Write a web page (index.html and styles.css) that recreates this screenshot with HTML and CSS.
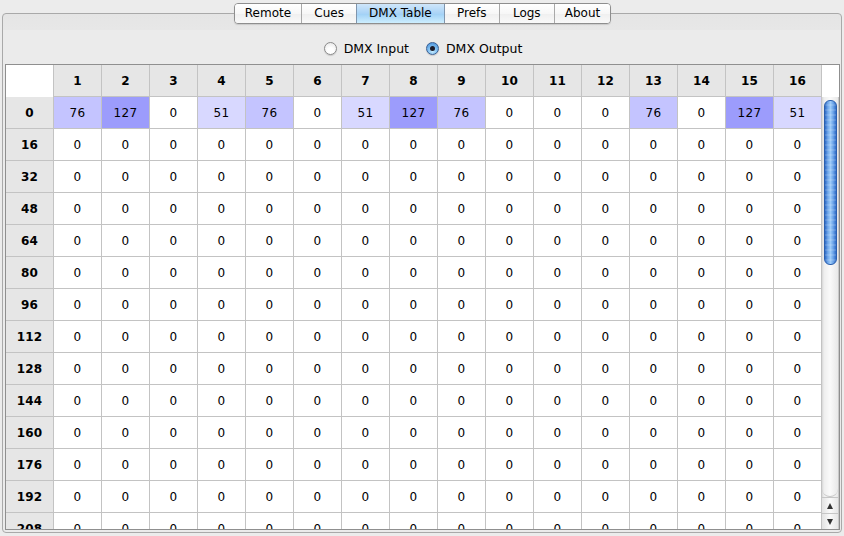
FILE: index.html
```html
<!DOCTYPE html>
<html>
<head>
<meta charset="utf-8">
<link rel="stylesheet" href="styles.css">
</head>
<body>
<div class="window">
  <div class="tabs">
    <div class="tab">Remote</div>
    <div class="tab">Cues</div>
    <div class="tab sel">DMX Table</div>
    <div class="tab">Prefs</div>
    <div class="tab">Logs</div>
    <div class="tab">About</div>
  </div>
  <div class="panel">
    <div class="radios">
      <label class="radio"><span class="dot"></span>DMX Input</label>
      <label class="radio on"><span class="dot"></span>DMX Output</label>
    </div>
    <div class="table">
      <div class="head">
        <div class="grid">
          <div class="c corner"></div>
          <div class="c h">1</div><div class="c h">2</div><div class="c h">3</div><div class="c h">4</div>
          <div class="c h">5</div><div class="c h">6</div><div class="c h">7</div><div class="c h">8</div>
          <div class="c h">9</div><div class="c h">10</div><div class="c h">11</div><div class="c h">12</div>
          <div class="c h">13</div><div class="c h">14</div><div class="c h">15</div><div class="c h">16</div>
        </div>
        <div class="headfill"></div>
      </div>
      <div class="body">
        <div class="rows grid">
          <div class="c h">0</div>
          <div class="c v76">76</div><div class="c v127">127</div><div class="c">0</div><div class="c v51">51</div>
          <div class="c v76">76</div><div class="c">0</div><div class="c v51">51</div><div class="c v127">127</div>
          <div class="c v76">76</div><div class="c">0</div><div class="c">0</div><div class="c">0</div>
          <div class="c v76">76</div><div class="c">0</div><div class="c v127">127</div><div class="c v51">51</div>

          <div class="c h">16</div>
          <div class="c">0</div><div class="c">0</div><div class="c">0</div><div class="c">0</div><div class="c">0</div><div class="c">0</div><div class="c">0</div><div class="c">0</div>
          <div class="c">0</div><div class="c">0</div><div class="c">0</div><div class="c">0</div><div class="c">0</div><div class="c">0</div><div class="c">0</div><div class="c">0</div>

          <div class="c h">32</div>
          <div class="c">0</div><div class="c">0</div><div class="c">0</div><div class="c">0</div><div class="c">0</div><div class="c">0</div><div class="c">0</div><div class="c">0</div>
          <div class="c">0</div><div class="c">0</div><div class="c">0</div><div class="c">0</div><div class="c">0</div><div class="c">0</div><div class="c">0</div><div class="c">0</div>

          <div class="c h">48</div>
          <div class="c">0</div><div class="c">0</div><div class="c">0</div><div class="c">0</div><div class="c">0</div><div class="c">0</div><div class="c">0</div><div class="c">0</div>
          <div class="c">0</div><div class="c">0</div><div class="c">0</div><div class="c">0</div><div class="c">0</div><div class="c">0</div><div class="c">0</div><div class="c">0</div>

          <div class="c h">64</div>
          <div class="c">0</div><div class="c">0</div><div class="c">0</div><div class="c">0</div><div class="c">0</div><div class="c">0</div><div class="c">0</div><div class="c">0</div>
          <div class="c">0</div><div class="c">0</div><div class="c">0</div><div class="c">0</div><div class="c">0</div><div class="c">0</div><div class="c">0</div><div class="c">0</div>

          <div class="c h">80</div>
          <div class="c">0</div><div class="c">0</div><div class="c">0</div><div class="c">0</div><div class="c">0</div><div class="c">0</div><div class="c">0</div><div class="c">0</div>
          <div class="c">0</div><div class="c">0</div><div class="c">0</div><div class="c">0</div><div class="c">0</div><div class="c">0</div><div class="c">0</div><div class="c">0</div>

          <div class="c h">96</div>
          <div class="c">0</div><div class="c">0</div><div class="c">0</div><div class="c">0</div><div class="c">0</div><div class="c">0</div><div class="c">0</div><div class="c">0</div>
          <div class="c">0</div><div class="c">0</div><div class="c">0</div><div class="c">0</div><div class="c">0</div><div class="c">0</div><div class="c">0</div><div class="c">0</div>

          <div class="c h">112</div>
          <div class="c">0</div><div class="c">0</div><div class="c">0</div><div class="c">0</div><div class="c">0</div><div class="c">0</div><div class="c">0</div><div class="c">0</div>
          <div class="c">0</div><div class="c">0</div><div class="c">0</div><div class="c">0</div><div class="c">0</div><div class="c">0</div><div class="c">0</div><div class="c">0</div>

          <div class="c h">128</div>
          <div class="c">0</div><div class="c">0</div><div class="c">0</div><div class="c">0</div><div class="c">0</div><div class="c">0</div><div class="c">0</div><div class="c">0</div>
          <div class="c">0</div><div class="c">0</div><div class="c">0</div><div class="c">0</div><div class="c">0</div><div class="c">0</div><div class="c">0</div><div class="c">0</div>

          <div class="c h">144</div>
          <div class="c">0</div><div class="c">0</div><div class="c">0</div><div class="c">0</div><div class="c">0</div><div class="c">0</div><div class="c">0</div><div class="c">0</div>
          <div class="c">0</div><div class="c">0</div><div class="c">0</div><div class="c">0</div><div class="c">0</div><div class="c">0</div><div class="c">0</div><div class="c">0</div>

          <div class="c h">160</div>
          <div class="c">0</div><div class="c">0</div><div class="c">0</div><div class="c">0</div><div class="c">0</div><div class="c">0</div><div class="c">0</div><div class="c">0</div>
          <div class="c">0</div><div class="c">0</div><div class="c">0</div><div class="c">0</div><div class="c">0</div><div class="c">0</div><div class="c">0</div><div class="c">0</div>

          <div class="c h">176</div>
          <div class="c">0</div><div class="c">0</div><div class="c">0</div><div class="c">0</div><div class="c">0</div><div class="c">0</div><div class="c">0</div><div class="c">0</div>
          <div class="c">0</div><div class="c">0</div><div class="c">0</div><div class="c">0</div><div class="c">0</div><div class="c">0</div><div class="c">0</div><div class="c">0</div>

          <div class="c h">192</div>
          <div class="c">0</div><div class="c">0</div><div class="c">0</div><div class="c">0</div><div class="c">0</div><div class="c">0</div><div class="c">0</div><div class="c">0</div>
          <div class="c">0</div><div class="c">0</div><div class="c">0</div><div class="c">0</div><div class="c">0</div><div class="c">0</div><div class="c">0</div><div class="c">0</div>

          <div class="c h">208</div>
          <div class="c">0</div><div class="c">0</div><div class="c">0</div><div class="c">0</div><div class="c">0</div><div class="c">0</div><div class="c">0</div><div class="c">0</div>
          <div class="c">0</div><div class="c">0</div><div class="c">0</div><div class="c">0</div><div class="c">0</div><div class="c">0</div><div class="c">0</div><div class="c">0</div>
        </div>
        <div class="scrollbar">
          <div class="track"><div class="thumb"></div></div>
          <div class="arrow up"><span class="tri-up"></span></div>
          <div class="arrow down"><span class="tri-down"></span></div>
        </div>
      </div>
    </div>
  </div>
</div>
</body>
</html>
```
FILE: styles.css
```css
html, body {
  margin: 0;
  padding: 0;
  background: #ececec;
}
body {
  width: 844px;
  height: 536px;
  overflow: hidden;
  font-family: "DejaVu Sans", "Liberation Sans", sans-serif;
  font-size: 12px;
  color: #000;
}
.window {
  padding: 3px 2px 0 2px;
  display: flex;
  flex-direction: column;
}
.tabs {
  position: relative;
  z-index: 1;
  align-self: center;
  display: flex;
  height: 21px;
  box-sizing: border-box;
  border: 1px solid #8e8e8e;
  border-radius: 4px;
  overflow: hidden;
  box-shadow: 0 1px 1px rgba(0,0,0,0.12);
  margin-left: 1px;
}
.tab {
  min-width: 55px;
  box-sizing: border-box;
  padding: 0 10px;
  display: flex;
  align-items: center;
  justify-content: center;
  line-height: 19px;
  background: linear-gradient(#ffffff, #f7f7f7 50%, #efefef 51%, #f9f9f9);
  border-left: 1px solid #a9a9a9;
}
.tab:first-child { border-left: none; }
.tab.sel {
  padding: 0 12px;
  background: linear-gradient(#cfe6fa, #a9d3f6 50%, #9fd0f6 51%, #cdeefe);
  border-left-color: #7f95ad;
}
.tab.sel + .tab { border-left-color: #7f95ad; }
.panel {
  margin-top: -11px;
  height: 520px;
  box-sizing: border-box;
  border: 1px solid #a9a9a9;
  border-radius: 4px;
  background: linear-gradient(#e5e5e5 0, #e7e7e7 16px, #ebebeb 16px);
  display: flex;
  flex-direction: column;
  padding: 26px 1px 2px 2px;
}
.radios {
  display: flex;
  justify-content: center;
  gap: 17px;
  height: 16px;
  align-items: center;
  margin-left: 1px;
  font-size: 12.5px;
}
.radio {
  display: flex;
  align-items: center;
  gap: 7px;
}
.dot {
  width: 13px;
  height: 13px;
  box-sizing: border-box;
  border-radius: 50%;
  border: 1px solid #8a8a8a;
  background: radial-gradient(circle at 50% 70%, #ffffff 30%, #e4e4e4 100%);
  box-shadow: 0 1px 1px rgba(0,0,0,0.15);
  display: flex;
  align-items: center;
  justify-content: center;
}
.radio.on .dot {
  border-color: #3a5f93;
  background: radial-gradient(circle at 50% 75%, #c6ecff 0, #7fbef0 45%, #3d87d6 100%);
}
.radio.on .dot::after {
  content: "";
  width: 5px;
  height: 5px;
  border-radius: 50%;
  background: #1b1b2a;
}
.table {
  margin-top: 8px;
  flex: 1;
  min-height: 0;
  border: 1px solid #8f8f8f;
  background: #fff;
  display: flex;
  flex-direction: column;
  overflow: hidden;
}
.head {
  display: flex;
  flex: none;
}
.headfill { flex: 1; background: #fff; }
.grid {
  display: grid;
  grid-template-columns: repeat(17, 48px);
  grid-auto-rows: 32px;
}
.c {
  box-sizing: border-box;
  border-right: 1px solid #c3c3c3;
  border-bottom: 1px solid #c3c3c3;
  display: flex;
  align-items: center;
  justify-content: center;
  letter-spacing: 0.4px;
  padding-top: 1px;
}
.c.corner {
  background: #fff;
  border-bottom: none;
}
.c.h {
  background: #e6e6e6;
  font-weight: bold;
  letter-spacing: 0.2px;
}
.v51 { background: #d8d8ff; }
.v76 { background: #c4c4ff; }
.v127 { background: #9c9cfc; }
.body {
  flex: 1;
  min-height: 0;
  display: flex;
  overflow: hidden;
}
.rows {
  align-content: start;
}
.scrollbar {
  flex: 1;
  display: flex;
  flex-direction: column;
  background: linear-gradient(to right, #d6d6d6 0, #eeeeee 2px, #fafafa 50%, #e8e8e8 100%);
  border-right: 1px solid #c8c8c8;
}
.track {
  flex: 1;
  padding: 3px 1px 0 2px;
  border-radius: 8px 8px 8px 8px;
  border-bottom: 1px solid #c6c6c6;
}
.thumb {
  height: 165px;
  border-radius: 6px;
  border: 1px solid #2a5fae;
  box-sizing: border-box;
  background:
    repeating-linear-gradient(#ffffff00 0, #ffffff00 3px, rgba(255,255,255,0.12) 3px, rgba(255,255,255,0.12) 5px),
    linear-gradient(to right, #2d69c4, #6ea6ea 25%, #9ccaf8 50%, #6aa3e8 75%, #2f6bc6);
}
.arrow {
  height: 15px;
  display: flex;
  align-items: center;
  justify-content: center;
  border-top: 1px solid #c6c6c6;
  background: linear-gradient(to right, #e2e2e2, #fafafa 50%, #e6e6e6);
}
.tri-up {
  width: 0; height: 0;
  border-left: 3.5px solid transparent;
  border-right: 3.5px solid transparent;
  border-bottom: 6px solid #333;
}
.tri-down {
  width: 0; height: 0;
  border-left: 3.5px solid transparent;
  border-right: 3.5px solid transparent;
  border-top: 6px solid #333;
}
```
